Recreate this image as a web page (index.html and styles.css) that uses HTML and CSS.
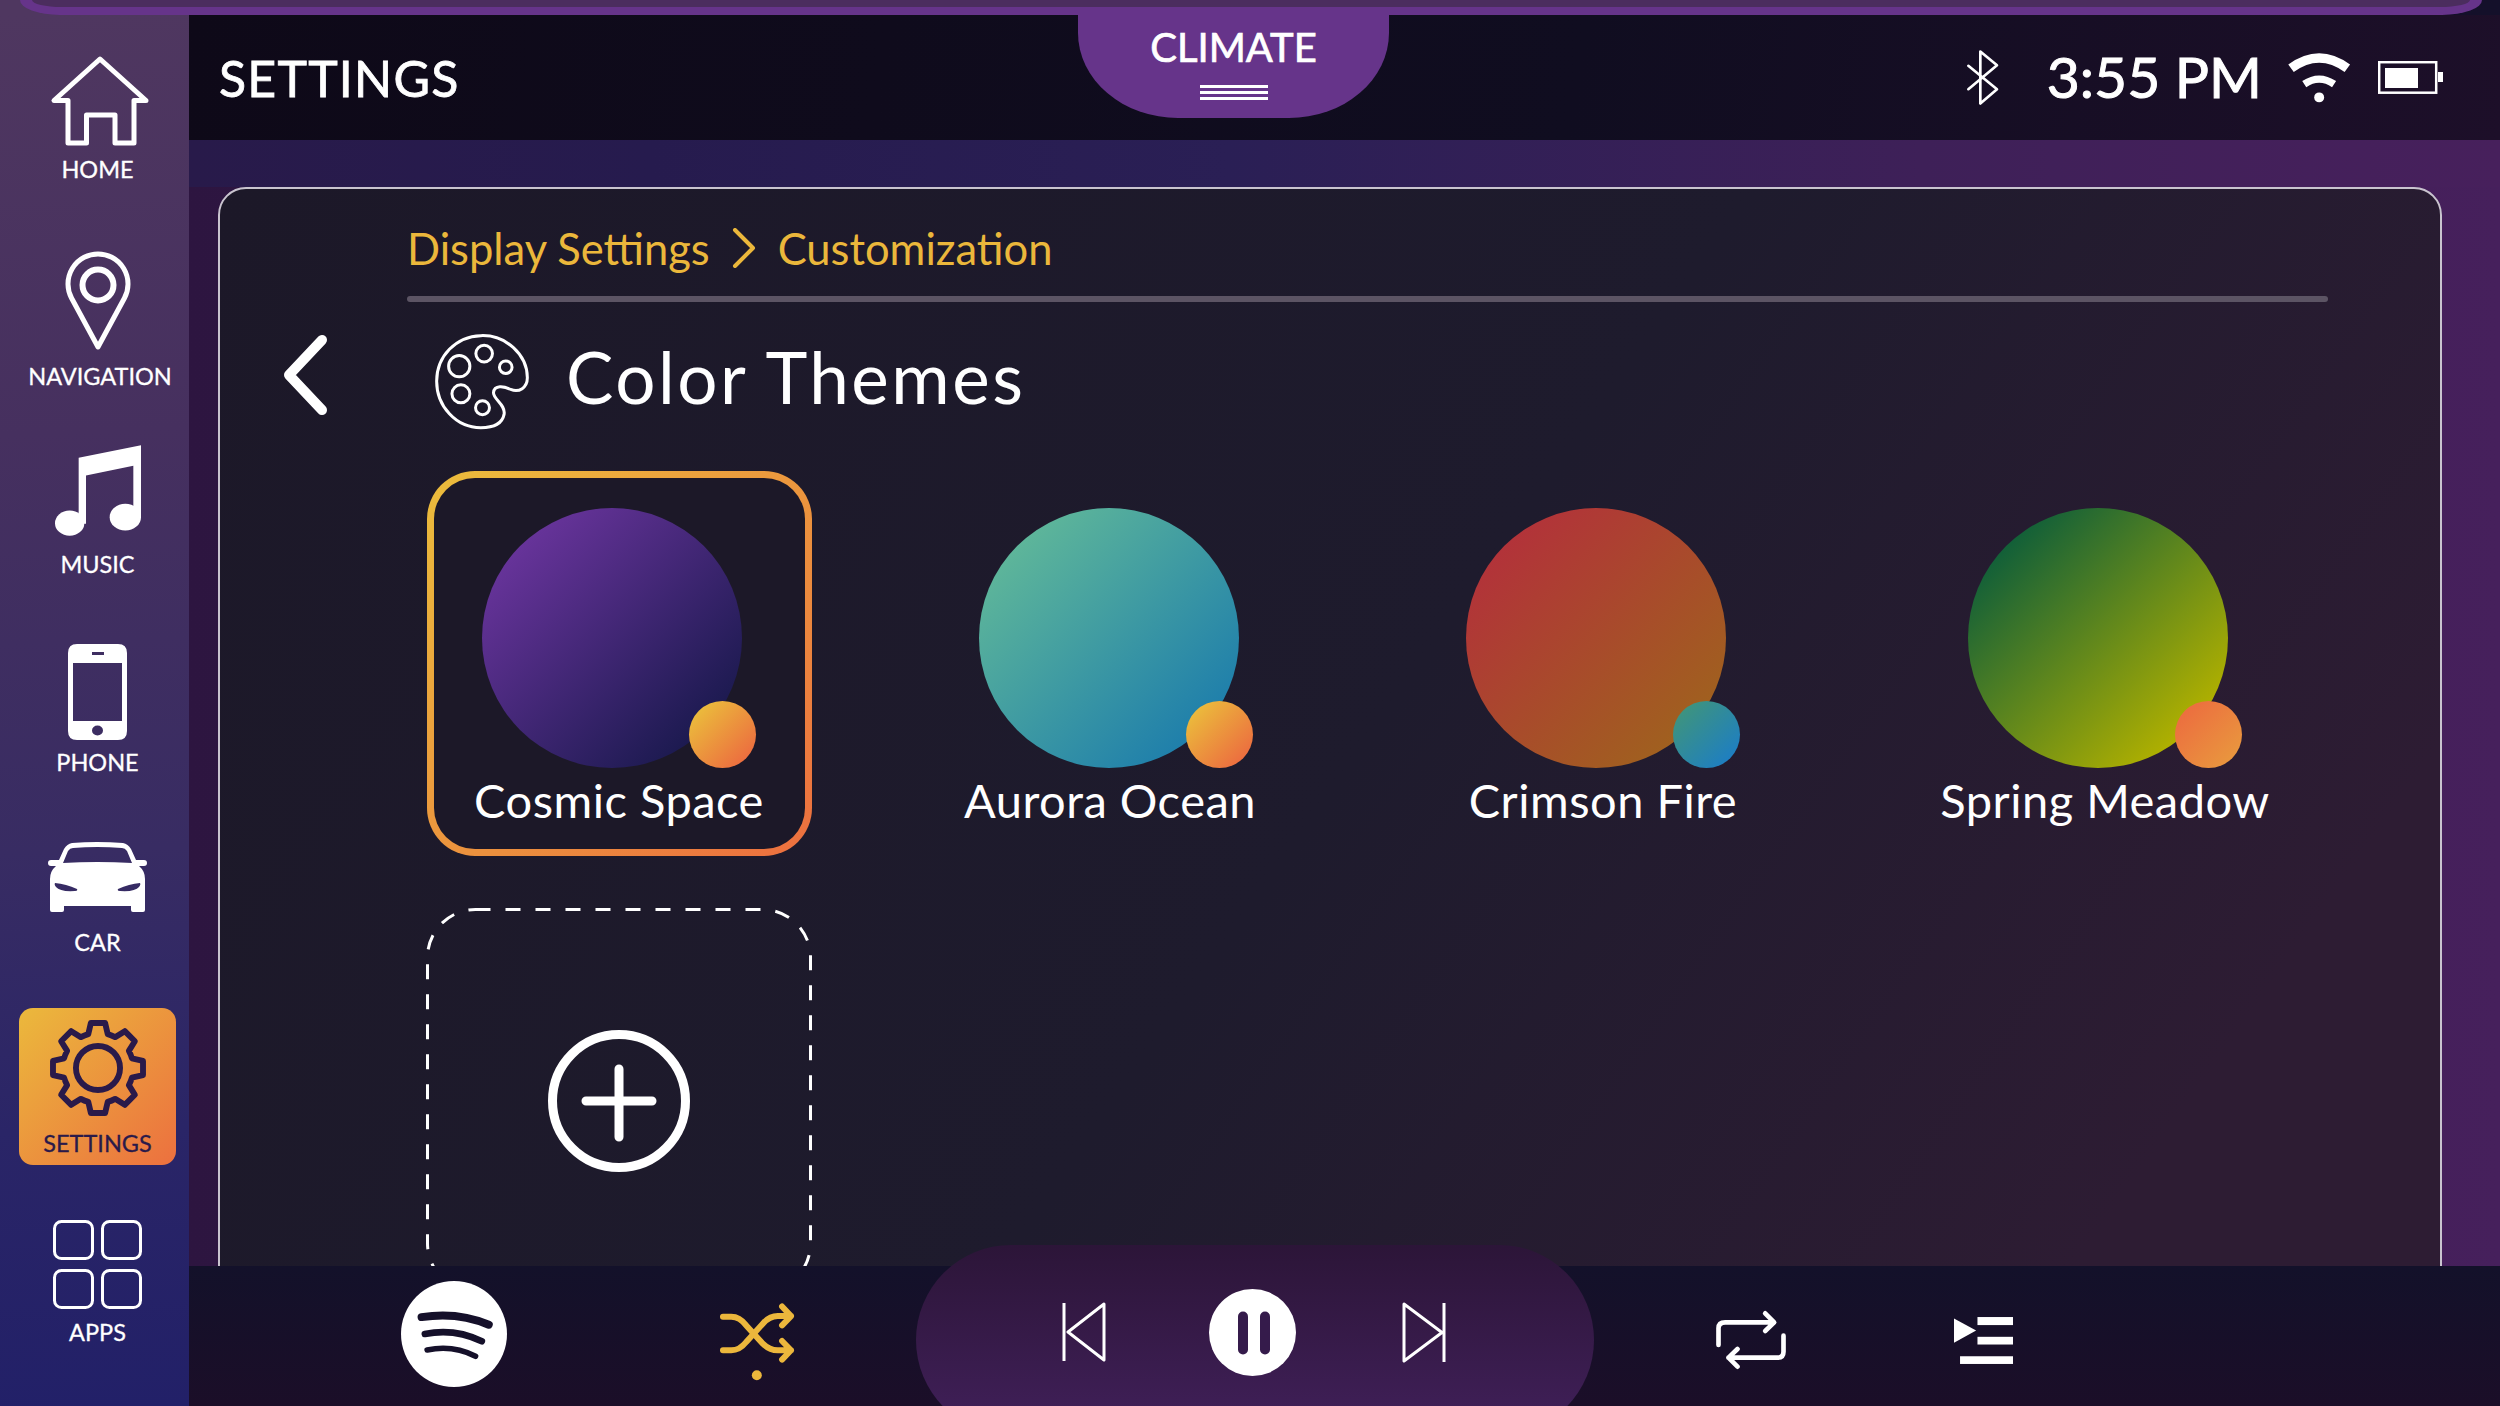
FILE: index.html
```html
<!DOCTYPE html>
<html lang="en">
<head>
    <meta charset="UTF-8">
    <meta name="viewport" content="width=device-width, initial-scale=1.0">
    <title>Settings - Color Themes</title>
    <link rel="stylesheet" href="styles.css">
</head>
<body>
<div class="app">
    <div class="top-strip"><div class="top-frame"><div class="top-inner"></div></div></div>

    <div class="columns">
        <!-- left navigation -->
        <nav class="sidebar">
            <a class="nav-item nav-home">
                <svg class="line-icon" width="100" height="92" viewBox="0 0 100 92"><path d="M50 4 L4 45.5 H18 V88 H36.5 V60 H65 V88 H84 V45.5 H96 Z"/></svg>
                <span>HOME</span>
            </a>
            <a class="nav-item nav-map">
                <svg class="line-icon" width="66" height="100" viewBox="0 0 66 100"><path d="M33 96 L6.5 47 A30 30 0 1 1 59.5 47 Z"/><circle cx="33" cy="34" r="15.5" stroke-width="6"/></svg>
                <span>NAVIGATION</span>
            </a>
            <a class="nav-item nav-music">
                <svg class="fill-icon" width="86" height="91" viewBox="44 34 258 272"><path d="M115 72 L302 34 V250 H279 V96 L137 125 V270 H115 Z"/><ellipse cx="88" cy="268" rx="44" ry="38"/><ellipse cx="255" cy="250" rx="47" ry="40"/></svg>
                <span>MUSIC</span>
            </a>
            <a class="nav-item nav-phone">
                <svg class="fill-icon" width="59" height="96" viewBox="0 0 59 96"><path fill-rule="evenodd" d="M9 0 H50 Q59 0 59 9 V87 Q59 96 50 96 H9 Q0 96 0 87 V9 Q0 0 9 0 Z M5 19 V77 H54 V19 Z M24 8 V11 H36 V8 Z M29.5 81.5 A5.5 5 0 1 0 29.5 91.5 A5.5 5 0 1 0 29.5 81.5 Z"/></svg>
                <span>PHONE</span>
            </a>
            <a class="nav-item nav-car">
                <svg class="fill-icon" width="99" height="70" viewBox="0 0 99 70"><path fill-rule="evenodd" d="M24 1 Q49 -1 75 1 Q80 2 83 7 L88 18 H96 Q99 18 99 21 Q99 24 96 24 H91 Q97 29 97 37 V68 Q97 70 95 70 H85 Q83 70 83 68 V64 H16 V68 Q16 70 14 70 H4 Q2 70 2 68 V37 Q2 29 8 24 H3 Q0 24 0 21 Q0 18 3 18 H11 L16 7 Q19 2 24 1 Z M25 6 Q49 4 74 6 Q77 6 79 9 L84 21 Q49 19 15 21 L20 9 Q22 6 25 6 Z M7 41 Q18 42 29 47 Q30 49 27 49 Q12 50 8 45 Q6 43 7 41 Z M92 41 Q81 42 70 47 Q69 49 72 49 Q87 50 91 45 Q93 43 92 41 Z"/></svg>
                <span>CAR</span>
            </a>
            <a class="nav-item nav-settings">
                <svg class="gear-icon" width="98" height="98" viewBox="0 0 100 100"><path d="M40.08 15.4 L42.73 4.07 H57.27 L59.92 15.4 A36 36 0 0 1 67.45 18.51 L77.33 12.38 L87.62 22.67 L81.49 32.55 A36 36 0 0 1 84.6 40.08 L95.93 42.73 V57.27 L84.6 59.92 A36 36 0 0 1 81.49 67.45 L87.62 77.33 L77.33 87.62 L67.45 81.49 A36 36 0 0 1 59.92 84.6 L57.27 95.93 H42.73 L40.08 84.6 A36 36 0 0 1 32.55 81.49 L22.67 87.62 L12.38 77.33 L18.51 67.45 A36 36 0 0 1 15.4 59.92 L4.07 57.27 V42.73 L15.4 40.08 A36 36 0 0 1 18.51 32.55 L12.38 22.67 L22.67 12.38 L32.55 18.51 A36 36 0 0 1 40.08 15.4 Z"/><circle cx="50" cy="50" r="22.5"/></svg>
                <span>SETTINGS</span>
            </a>
            <a class="nav-item nav-apps">
                <svg class="line-icon thin" width="89" height="89" viewBox="0 0 89 89"><rect x="1.5" y="1.5" width="38" height="37" rx="7"/><rect x="49.5" y="1.5" width="38" height="37" rx="7"/><rect x="1.5" y="50.5" width="38" height="37" rx="7"/><rect x="49.5" y="50.5" width="38" height="37" rx="7"/></svg>
                <span>APPS</span>
            </a>
        </nav>

        <div class="main">
            <header class="header">
                <div class="header-title">SETTINGS</div>
                <div class="climate-tab">
                    <span class="climate-label">CLIMATE</span>
                    <span class="climate-lines"><i></i><i></i><i></i></span>
                </div>
                <div class="status">
                    <svg class="bt-icon" width="35" height="57" viewBox="50 50 105 170"><path d="M60 100 L146 170 L96 213 V57 L146 98 L60 170"/></svg>
                    <span class="clock">3:55 PM</span>
                    <svg class="wifi-icon" width="68" height="53" viewBox="1010 50 205 160"><path d="M1028 102 Q1113 40 1198 102" stroke-width="28"/><path d="M1068 150 Q1113 120 1158 150" stroke-width="22"/><circle class="wifi-dot" cx="1113" cy="190" r="15"/></svg>
                    <svg class="batt-icon" width="65" height="33" viewBox="0 0 65 33"><rect class="batt-body" x="1.2" y="1.2" width="57" height="30.5"/><rect x="7" y="7" width="33" height="20"/><rect x="60" y="11" width="5" height="10"/></svg>
                </div>
            </header>

            <section class="content">
                <div class="panel">
                    <div class="crumbs">
                        <span>Display Settings</span>
                        <svg class="crumb-sep" width="24" height="40" viewBox="0 0 24 40"><path d="M3 2 L21 20 L3 38"/></svg>
                        <span>Customization</span>
                    </div>
                    <div class="divider"></div>

                    <div class="title-row">
                        <svg class="back-icon" width="43" height="80" viewBox="0 0 43 80"><path d="M38 5 L5 40 L38 75"/></svg>
                        <svg class="palette-icon" width="97" height="98" viewBox="25 25 290 295">
                            <path d="M165 33 C240 30 305 90 305 160 C305 190 280 205 255 195 C235 185 205 180 203 205 C203 225 240 240 235 270 C228 305 190 310 165 310 C90 310 32 245 32 170 C32 95 90 35 165 33 Z"/>
                            <circle cx="175" cy="87" r="25"/>
                            <circle cx="100" cy="125" r="32"/>
                            <circle cx="240" cy="128" r="19"/>
                            <circle cx="105" cy="208" r="27"/>
                            <circle cx="170" cy="250" r="21"/>
                        </svg>
                        <h1 class="page-title">Color Themes</h1>
                    </div>

                    <div class="theme-grid">
                        <div class="theme selected">
                            <div class="swatch"><div class="ball ball-cosmic"></div><div class="dot dot-warm"></div></div>
                            <div class="theme-name">Cosmic Space</div>
                        </div>
                        <div class="theme theme-aurora">
                            <div class="swatch"><div class="ball ball-aurora"></div><div class="dot dot-warm"></div></div>
                            <div class="theme-name">Aurora Ocean</div>
                        </div>
                        <div class="theme">
                            <div class="swatch"><div class="ball ball-crimson"></div><div class="dot dot-sea"></div></div>
                            <div class="theme-name">Crimson Fire</div>
                        </div>
                        <div class="theme">
                            <div class="swatch"><div class="ball ball-spring"></div><div class="dot dot-orange"></div></div>
                            <div class="theme-name">Spring Meadow</div>
                        </div>
                        <div class="add-theme">
                            <svg class="add-dashes" width="386" height="385" viewBox="0 0 386 385"><rect x="1.5" y="1.5" width="383" height="382" rx="48"/></svg>
                            <svg class="add-plus" width="142" height="142" viewBox="0 0 142 142"><circle cx="71" cy="71" r="66.5"/><path d="M71 39 V107 M38 71 H104"/></svg>
                        </div>
                    </div>
                </div>
            </section>

            <!-- player -->
            <footer class="player">
                <svg class="spotify" width="106" height="106" viewBox="33 33 320 320">
                    <circle cx="193" cy="193" r="160"/>
                    <path d="M95 142 Q205 125 298 165" stroke-width="24"/>
                    <path d="M105 193 Q195 175 277 215" stroke-width="20"/>
                    <path d="M112 241 Q190 225 258 260" stroke-width="17"/>
                </svg>
                <svg class="shuffle" width="78" height="80" viewBox="985 95 235 240">
                    <path d="M1000 139 H1025 Q1050 139 1070 165 L1120 220 Q1140 240 1165 240 H1205 M1178 212 L1205 240 L1178 268"/>
                    <path d="M1000 240 H1025 Q1050 240 1070 215 L1120 160 Q1140 137 1165 137 H1205 M1178 108 L1205 137 L1178 165"/>
                    <circle cx="1102" cy="315" r="15"/>
                </svg>
                <div class="transport">
                    <svg class="skip" width="44" height="60" viewBox="0 0 44 60"><path d="M2 1 V59 M42 2 L6 30 L42 58 Z"/></svg>
                    <svg class="pause" width="87" height="87" viewBox="0 0 87 87"><circle cx="43.5" cy="43.5" r="43.5"/><rect x="29" y="22.5" width="10" height="43" rx="5"/><rect x="51" y="22.5" width="10" height="43" rx="5"/></svg>
                    <svg class="skip skip-next" width="44" height="61" viewBox="0 0 44 61"><path d="M42 1 V60 M2 2 L40 30.5 L2 59 Z"/></svg>
                </div>
                <svg class="repeat" width="72" height="60" viewBox="45 45 215 180">
                    <path d="M55 150 V100 Q55 82 75 82 H220 M195 55 L222 82 L195 108"/>
                    <path d="M250 122 V170 Q250 188 232 188 H85 M112 162 L85 188 L112 215"/>
                </svg>
                <svg class="queue" width="59" height="47" viewBox="762 68 176 140">
                    <path d="M762 72 L828 108 L762 145 Z"/>
                    <rect x="832" y="68" width="106" height="24"/>
                    <rect x="832" y="127" width="106" height="23"/>
                    <rect x="780" y="185" width="158" height="23"/>
                </svg>
            </footer>
        </div>
    </div>
</div>
</body>
</html>
```

FILE: styles.css
```css
* {
    box-sizing: border-box;
}

html, body {
    margin: 0;
    height: 100%;
}

body {
    font-family: "Lato", "Open Sans", sans-serif;
    color: #fff;
    background: #100d20;
}

svg {
    display: block;
    flex-shrink: 0;
}

.app {
    width: 2500px;
    height: 1406px;
    display: flex;
    flex-direction: column;
    overflow: hidden;
}

/* strip along the very top */
.top-strip {
    height: 15px;
    flex-shrink: 0;
    background: linear-gradient(90deg, #4f3760 0, #4f3760 400px, #14102a 400px);
}
.top-frame {
    height: 15px;
    margin: 0 18px 0 20px;
    background: #66348a;
    border-radius: 0 0 40px 40px / 0 0 15px 15px;
}
.top-inner {
    height: 7px;
    margin: 0 12px;
    background: #4b2d5e;
    border-radius: 0 0 30px 30px / 0 0 7px 7px;
}

.columns {
    flex: 1;
    display: flex;
    min-height: 0;
}

/* sidebar */
.sidebar {
    width: 189px;
    flex-shrink: 0;
    padding: 40px 0 0 6px;
    display: flex;
    flex-direction: column;
    background: linear-gradient(178deg, #4f3760 0%, #46305f 30%, #382c63 60%, #2a2567 80%, #222068 100%);
}
.nav-item {
    display: flex;
    flex-direction: column;
    align-items: center;
}
.nav-item span {
    font-size: 23.5px;
    line-height: 24px;
    -webkit-text-stroke: 0.3px currentColor;
}
.nav-home svg { margin-left: 5px; }
.nav-home span { margin-top: 10px; }
.nav-map { margin-top: 70px; }
.nav-map span { margin: 13px 0 0 5px; }
.nav-music { margin-top: 57px; }
.nav-music span { margin-top: 16px; }
.nav-phone { margin-top: 68px; }
.nav-phone span { margin-top: 10px; }
.nav-car { margin-top: 68px; }
.nav-car span { margin-top: 18px; }
.nav-settings {
    margin: 54px 13px 0;
    height: 157px;
    padding-top: 11px;
    border-radius: 14px;
    background: linear-gradient(135deg, #ebb93c, #ec703f);
    color: #2a1a4a;
}
.nav-settings span { margin-top: 14px; }
.nav-apps { margin-top: 55px; }
.nav-apps span { margin-top: 11px; }

.line-icon {
    fill: none;
    stroke: #fff;
    stroke-width: 5;
    stroke-linejoin: round;
}
.line-icon.thin {
    stroke-width: 3;
}
.fill-icon {
    fill: #fff;
}
.gear-icon {
    fill: none;
    stroke: #2a1a4a;
    stroke-width: 6;
    stroke-linejoin: round;
}

.main {
    flex: 1;
    min-width: 0;
    display: flex;
    flex-direction: column;
}

/* header */
.header {
    height: 125px;
    flex-shrink: 0;
    position: relative;
    display: flex;
    align-items: center;
    justify-content: space-between;
    padding: 0 57px 0 30px;
    background: linear-gradient(100deg, #0e0918 0%, #100d20 60%, #1d0f29 100%);
}
.header-title {
    font-size: 50px;
    line-height: 60px;
    letter-spacing: 1.2px;
    -webkit-text-stroke: 0.8px #fff;
}
.climate-tab {
    position: absolute;
    top: 0;
    left: 889px;
    width: 311px;
    height: 103px;
    padding-top: 12px;
    display: flex;
    flex-direction: column;
    align-items: center;
    background: #66348a;
    border-radius: 0 0 100px 100px / 0 0 85px 85px;
}
.climate-label {
    font-size: 40px;
    line-height: 40px;
    -webkit-text-stroke: 0.7px #fff;
}
.climate-lines {
    margin-top: 18px;
    display: flex;
    flex-direction: column;
    gap: 3px;
}
.climate-lines i {
    display: block;
    width: 68px;
    height: 3px;
    background: #fff;
}
.status {
    display: flex;
    align-items: center;
}
.bt-icon {
    fill: none;
    stroke: #fff;
    stroke-width: 8;
    stroke-linecap: round;
    stroke-linejoin: round;
}
.clock {
    margin: 0 0 4px 47px;
    font-size: 57px;
    line-height: 60px;
    -webkit-text-stroke: 1px #fff;
}
.wifi-icon {
    margin-left: 23px;
    fill: none;
    stroke: #fff;
}
.wifi-dot {
    fill: #fff;
    stroke: none;
}
.batt-icon {
    margin-left: 25px;
    fill: #fff;
}
.batt-body {
    fill: none;
    stroke: #fff;
    stroke-width: 2.5;
}

/* content area, the panel runs on below the player */
.content {
    flex: 1;
    min-height: 0;
    overflow: hidden;
    padding: 47px 58px 0 29px;
    background:
        linear-gradient(90deg, #281a4a 0%, #261b4e 20%, #2a1f55 45%, #3e2058 75%, #47205c 100%) 0 0 / 100% 47px no-repeat,
        linear-gradient(90deg, #2d1540, #46205c);
}
.panel {
    height: 1220px;
    border: 2px solid #c9c4cf;
    border-radius: 28px;
    background: linear-gradient(125deg, #1c1828 0%, #1e1b2d 50%, #2d1c33 85%);
}
.crumbs {
    margin: 28px 112px 0 187px;
    height: 62px;
    display: flex;
    align-items: center;
    font-size: 43.5px;
    color: #ebb73b;
}
.crumb-sep {
    margin: 0 22px;
    fill: none;
    stroke: #ebb73b;
    stroke-width: 4;
    stroke-linecap: round;
    stroke-linejoin: round;
}
.divider {
    height: 6px;
    margin: 17px 112px 0 187px;
    border-radius: 3px;
    background: #5c5464;
}
.title-row {
    margin: 31px 0 0 64px;
    height: 98px;
    display: flex;
    align-items: center;
}
.back-icon {
    margin-bottom: 14px;
    fill: none;
    stroke: #fff;
    stroke-width: 10;
    stroke-linecap: round;
    stroke-linejoin: round;
}
.palette-icon {
    margin-left: 107px;
    fill: none;
    stroke: #fff;
    stroke-width: 9;
}
.page-title {
    margin: 0 0 10px 35px;
    font-size: 71px;
    font-weight: 400;
    line-height: 80px;
    letter-spacing: 2.5px;
}

/* themes */
.theme-grid {
    margin: 40px 0 0 206px;
    display: grid;
    grid-template-columns: 386px 596px 390px 614px;
    grid-auto-rows: 385px;
    row-gap: 52px;
    justify-items: center;
}
.theme {
    padding-top: 30px;
    border: 7px solid transparent;
    border-radius: 48px;
    display: flex;
    flex-direction: column;
    align-items: center;
}
.theme.selected {
    width: 385px;
    background: linear-gradient(#1c1828, #1c1828) padding-box, linear-gradient(135deg, #ebbd3c, #ec6f3f) border-box;
}
.theme-aurora .swatch {
    margin-left: 12px;
}
.swatch {
    position: relative;
    width: 274px;
    height: 260px;
}
.ball {
    width: 260px;
    height: 260px;
    border-radius: 50%;
}
.dot {
    position: absolute;
    right: 0;
    bottom: 0;
    width: 67px;
    height: 67px;
    border-radius: 50%;
}
.ball-cosmic { background: linear-gradient(135deg, #663399 15%, #1c1a50 85%); }
.ball-aurora { background: linear-gradient(135deg, #5db59a 15%, #1f7fab 85%); }
.ball-crimson { background: linear-gradient(135deg, #b23339 15%, #a0601f 85%); }
.ball-spring { background: linear-gradient(135deg, #136038 15%, #b0b000 85%); }
.dot-warm { background: linear-gradient(135deg, #ebb93c 15%, #ec6f3f 85%); }
.dot-sea { background: linear-gradient(135deg, #3d9380 15%, #1f7fc0 85%); }
.dot-orange { background: linear-gradient(135deg, #ec6f3f 15%, #e9953e 85%); }
.theme-name {
    margin-top: 5px;
    font-size: 47px;
    line-height: 54px;
    letter-spacing: 0.5px;
    white-space: nowrap;
}
.add-theme {
    position: relative;
    width: 386px;
    height: 385px;
    display: flex;
    align-items: center;
    justify-content: center;
}
.add-dashes {
    position: absolute;
    top: 0;
    left: 0;
    fill: none;
    stroke: #fff;
    stroke-width: 3;
    stroke-dasharray: 15 15;
}
.add-plus {
    fill: none;
    stroke: #fff;
    stroke-width: 9;
    stroke-linecap: round;
}

/* player */
.player {
    height: 140px;
    flex-shrink: 0;
    position: relative;
    z-index: 1;
    display: flex;
    align-items: flex-start;
    padding-left: 212px;
    background: linear-gradient(180deg, #13112a, #1b0e28);
}
.spotify {
    margin-top: 15px;
    fill: none;
    stroke: #15102a;
    stroke-linecap: round;
}
.spotify circle {
    fill: #fff;
    stroke: none;
}
.shuffle {
    margin: 36px 0 0 211px;
    fill: none;
    stroke: #ecb73c;
    stroke-width: 18;
    stroke-linecap: round;
    stroke-linejoin: round;
}
.shuffle circle {
    fill: #ecb73c;
    stroke: none;
}
.transport {
    width: 678px;
    height: 190px;
    margin: -21px 0 0 120px;
    padding: 0 0 16px 146px;
    display: flex;
    align-items: center;
    gap: 103px;
    border-radius: 95px;
    background: linear-gradient(180deg, #2c1538, #41205a);
}
.skip {
    fill: none;
    stroke: #fff;
    stroke-width: 3;
    stroke-linejoin: round;
}
.skip-next {
    margin-left: 3px;
}
.pause {
    fill: #fff;
}
.pause rect {
    fill: #351b4b;
}
.repeat {
    margin: 44px 0 0 121px;
    fill: none;
    stroke: #fff;
    stroke-width: 14;
    stroke-linecap: round;
    stroke-linejoin: round;
}
.queue {
    margin: 51px 0 0 167px;
    fill: #fff;
}
```
